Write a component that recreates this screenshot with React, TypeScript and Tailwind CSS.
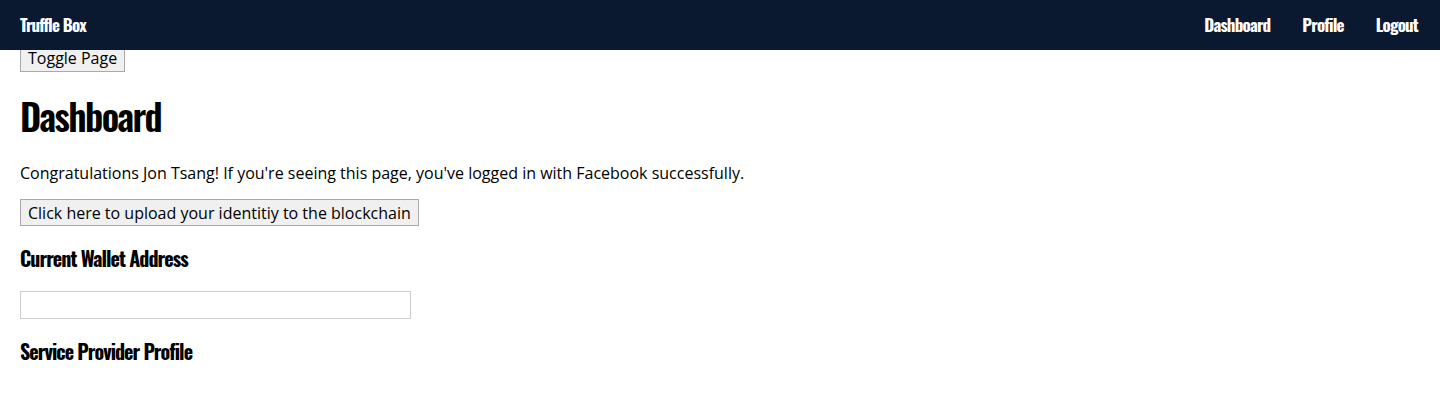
const heading = "font-['Oswald','Open_Sans',sans-serif] [font-stretch:condensed]"

export default function App() {
  const navLinks = ['Dashboard', 'Profile', 'Logout']

  return (
    <div className="min-h-[419px] bg-white font-['Open_Sans',sans-serif] text-black">
      {/* Navbar */}
      <nav className="fixed top-0 left-0 w-full h-[50px] bg-[#0b1930] flex items-center justify-between px-5 z-10">
        <a className={`${heading} text-white font-bold text-[17px] tracking-[-0.8px]`}>Truffle Box</a>
        <div className="flex gap-8 pr-[2px]">
          {navLinks.map((link) => (
            <a key={link} className={`${heading} text-white font-bold text-[17px] tracking-[-0.8px]`}>
              {link}
            </a>
          ))}
        </div>
      </nav>

      <main className="pt-[44px] px-5">
        <button className="bg-[#f0f0f0] border border-[#a9a9a9] px-[7px] h-[28px] text-[16px] leading-none">
          Toggle Page
        </button>

        <h1 className={`${heading} font-semibold text-[37px] leading-none mt-[25px] tracking-[-1.6px]`}>Dashboard</h1>

        <p className="mt-[27px] text-[16px] leading-[24px]">
          Congratulations Jon Tsang! If you're seeing this page, you've logged in with Facebook successfully.
        </p>

        <button className="mt-[14px] bg-[#f0f0f0] border border-[#a9a9a9] px-[7px] h-[27px] text-[16px] leading-none">
          Click here to upload your identitiy to the blockchain
        </button>

        <h3 className={`${heading} font-bold text-[20px] leading-none mt-[22px] tracking-[-0.95px]`}>Current Wallet Address</h3>

        <input className="block mt-[23px] w-[391px] h-[28px] border border-[#cccccc] outline-none" />

        <h3 className={`${heading} font-bold text-[20px] leading-none mt-[22px] tracking-[-0.95px]`}>Service Provider Profile</h3>
      </main>
    </div>
  )
}
